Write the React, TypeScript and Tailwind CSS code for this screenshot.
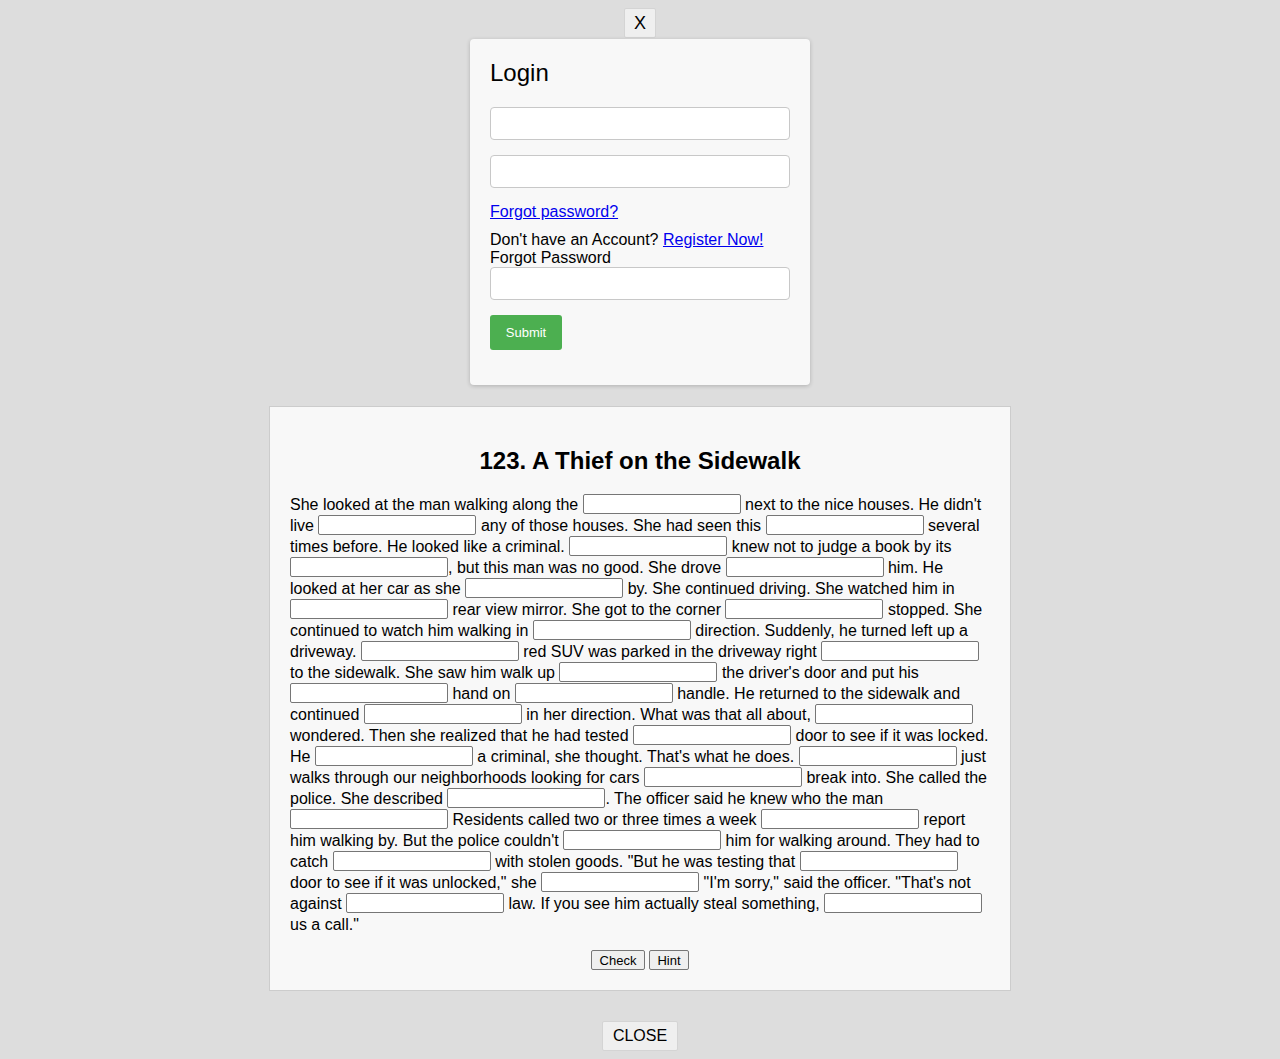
import React from 'react';

const STORY =
  'She looked at the man walking along the _ next to the nice houses. He didn\'t live _ any of those houses. She had seen this _ several times before. He looked like a criminal. _ knew not to judge a book by its _, but this man was no good. She drove _ him. He looked at her car as she _ by. She continued driving. She watched him in _ rear view mirror. She got to the corner _ stopped. She continued to watch him walking in _ direction. Suddenly, he turned left up a driveway. _ red SUV was parked in the driveway right _ to the sidewalk. She saw him walk up _ the driver\'s door and put his _ hand on _ handle. He returned to the sidewalk and continued _ in her direction. What was that all about, _ wondered. Then she realized that he had tested _ door to see if it was locked. He _ a criminal, she thought. That\'s what he does. _ just walks through our neighborhoods looking for cars _ break into. She called the police. She described _. The officer said he knew who the man _ Residents called two or three times a week _ report him walking by. But the police couldn\'t _ him for walking around. They had to catch _ with stolen goods. "But he was testing that _ door to see if it was unlocked," she _ "I\'m sorry," said the officer. "That\'s not against _ law. If you see him actually steal something, _ us a call."';

function Blank() {
  return (
    <input
      type="text"
      className="w-[158px] h-[20px] border border-[#767676] bg-white rounded-[2px] px-[2px] text-[13px] leading-none align-top"
    />
  );
}

export default function App() {
  const parts = STORY.split('_');

  return (
    <div className="min-h-[1059px] bg-[#dddddd] text-black font-['Liberation_Sans',Arial,sans-serif] flex flex-col items-center pt-[8px]">
      {/* close login */}
      <button className="w-[32px] h-[30px] bg-[#efefef] border border-[#d4d4d4] rounded-[2px] text-[18px] leading-none mb-[1px]">
        X
      </button>

      {/* Login card */}
      <div className="w-[340px] bg-[#f8f8f8] rounded-[4px] shadow-[0_1px_4px_rgba(0,0,0,0.2)] p-[20px] pb-[35px]">
        <h2 className="text-[24px] leading-[28px] mb-[20px]">Login</h2>
        <input className="block w-[300px] h-[33px] bg-white border border-[#c8c8c8] rounded-[4px] mb-[15px]" />
        <input className="block w-[300px] h-[33px] bg-white border border-[#c8c8c8] rounded-[4px] mb-[15px]" />
        <a href="#" className="block text-[16px] leading-[18px] text-[#0000ee] underline">
          Forgot password?
        </a>
        <div className="mt-[10px] text-[16px] leading-[18px]">
          Don't have an Account?{' '}
          <a href="#" className="text-[#0000ee] underline">
            Register Now!
          </a>
        </div>
        <div className="text-[16px] leading-[18px]">Forgot Password</div>
        <input className="block w-[300px] h-[33px] bg-white border border-[#c8c8c8] rounded-[4px] mb-[15px]" />
        <button className="w-[72px] h-[35px] bg-[#4caf50] text-white text-[13px] rounded-[3px]">Submit</button>
      </div>

      {/* Exercise */}
      <div className="mt-[21px] w-[742px] bg-[#f8f8f8] border border-[#cccccc] px-[20px] pt-[20px] pb-[20px]">
        <h2 className="text-[24px] leading-[28px] font-bold text-center mt-[20px] mb-[19px]">
          123. A Thief on the Sidewalk
        </h2>
        <p className="text-[16px] leading-[21px]">
          {parts.map((p, i) => (
            <React.Fragment key={i}>
              {p}
              {i < parts.length - 1 && <Blank />}
            </React.Fragment>
          ))}
        </p>
        <div className="mt-[15px] flex justify-center gap-[4px]">
          <button className="h-[20px] w-[54px] text-[13px] leading-none bg-[#efefef] border border-[#767676] rounded-[2px]">
            Check
          </button>
          <button className="h-[20px] w-[40px] text-[13px] leading-none bg-[#efefef] border border-[#767676] rounded-[2px]">
            Hint
          </button>
        </div>
      </div>

      <button className="mt-[30px] w-[76px] h-[30px] bg-[#efefef] border border-[#d4d4d4] rounded-[2px] text-[16px]">
        CLOSE
      </button>
    </div>
  );
}
